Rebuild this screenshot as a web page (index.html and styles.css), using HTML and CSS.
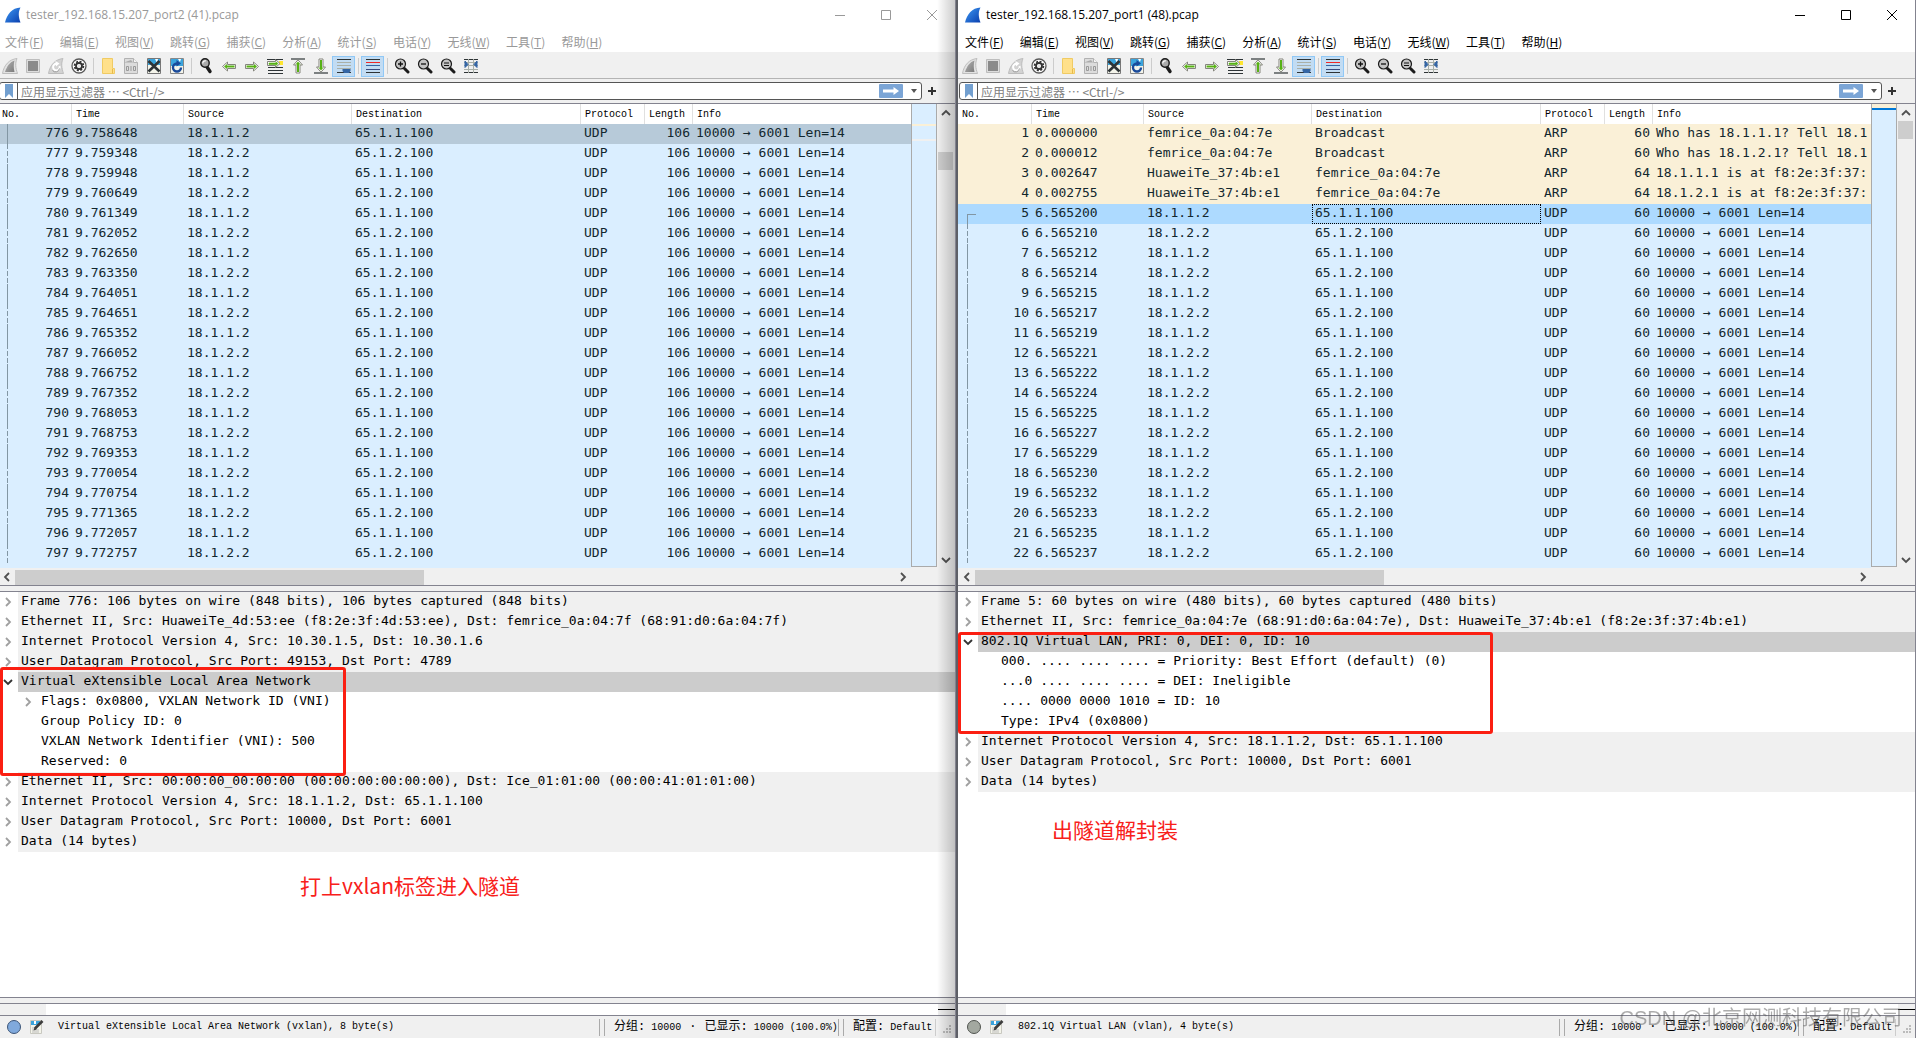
FILE: index.html
```html
<!DOCTYPE html>
<html lang="zh-CN">
<head>
<meta charset="utf-8">
<title>Wireshark</title>
<link rel="stylesheet" href="styles.css">
</head>
<body>
<svg class="sprite" aria-hidden="true">
  <defs>
    <linearGradient id="gBlue" x1="0" y1="0" x2="1" y2="1"><stop offset="0" stop-color="#3f9bf5"/><stop offset="1" stop-color="#0a3fae"/></linearGradient>
    <linearGradient id="gGrey" x1="0" y1="0" x2="1" y2="1"><stop offset="0" stop-color="#b5b5b5"/><stop offset="1" stop-color="#7b7b7b"/></linearGradient>
    <symbol id="logo" viewBox="0 0 16 16"><path d="M0 15.500C2 7 7 1 15.500 0.500C13 5 13.500 10 15.500 15.500Z" fill="url(#gBlue)"/></symbol>
    <symbol id="fin" viewBox="0 0 16 16"><path d="M0.500 15.500C2 7 7 1.500 15 0.500C13 5 13.500 10 15.500 15.500Z" fill="#e2e2e2" stroke="#bdbdbd"/><path d="M3 14C5 8 8 4 12.500 2.500C11.500 6 11.500 10 12.500 14Z" fill="url(#gGrey)"/></symbol>
    <symbol id="stop" viewBox="0 0 16 16"><path d="M1.500 1.500h13v13h-13z" fill="#ddd" stroke="#bdbdbd"/><path d="M3 3h10v10H3z" fill="#8a8a8a"/></symbol>
    <symbol id="restart" viewBox="0 0 16 16"><path d="M0.500 15.500C2 7 7 1.500 15 0.500C13 5 13.500 10 15.500 15.500Z" fill="#d2d2d2" stroke="#bdbdbd"/><path d="M11.500 8a3.300 3.300 0 1 1-3-2.200" fill="none" stroke="#fff" stroke-width="2"/><path d="M7.500 3l4 2.500-3.500 3z" fill="#fff"/><path d="M4.500 12.500a4 4 0 0 0 7-2" fill="none" stroke="#999"/></symbol>
    <symbol id="options" viewBox="0 0 16 16"><circle cx="8" cy="8" r="7" fill="#fff" stroke="#5a5a5a" stroke-width="1.300"/><circle cx="8" cy="8" r="4.400" fill="none" stroke="#333" stroke-width="1.800" stroke-dasharray="2 1.450"/><circle cx="8" cy="8" r="3" fill="none" stroke="#333" stroke-width="1.800"/><circle cx="8" cy="8" r="1.700" fill="#e8e8e8"/></symbol>
    <symbol id="open" viewBox="0 0 16 16"><path d="M2.500 0.500h10v10h2v5h-12z" fill="#ffe08a" stroke="#f0cb63"/><path d="M12.500 11v4.500" stroke="#e6b94a"/></symbol>
    <symbol id="save" viewBox="0 0 16 16"><path d="M1.500 0.500h9l4 4v11h-13z" fill="#dcdcdc" stroke="#b2b2b2"/><path d="M1 4.500h9L8 2z" fill="#aaa"/><path d="M10.500 0.500v4h4" fill="#f5f5f5" stroke="#b2b2b2"/><g fill="none" stroke="#999"><path d="M3.500 8.500h2v4h-2zM8 8v5M10.500 8.500h2v4h-2z"/></g></symbol>
    <symbol id="closef" viewBox="0 0 16 16"><path d="M1.500 0.500h13v15h-13z" fill="#f4f4ea" stroke="#777"/><path d="M2 1h12v6H2z" fill="#3ba4dc"/><path d="M9 1h3l-1 4z" fill="#fff"/><path d="M2.500 3l11 10.500M13.500 3L2.500 13.500" stroke="#2e3436" stroke-width="2.600"/></symbol>
    <symbol id="reload" viewBox="0 0 16 16"><path d="M1.500 0.500h13v15h-13z" fill="#f4f4ea" stroke="#888"/><path d="M2 1h12v7H2z" fill="#3ba4dc"/><path d="M9 1h3l-1 3z" fill="#fff"/><path d="M12 9.500A4 4 0 1 1 8 5.500" fill="none" stroke="#1a4a9a" stroke-width="2.400"/><path d="M7.500 2l4.500 3.500-4.500 3z" fill="#1a4a9a"/></symbol>
    <symbol id="find" viewBox="0 0 16 16"><path d="M9 9l3 4.500" stroke="#1b1b1b" stroke-width="3.400" stroke-linecap="round"/><circle cx="7" cy="5" r="4.200" fill="#aaa" stroke="#1b1b1b" stroke-width="1.400"/><path d="M4.800 5.500a2.400 2.400 0 0 1 3-2.600" fill="none" stroke="#fff" stroke-width="1.200"/></symbol>
    <symbol id="prev" viewBox="0 0 16 16"><path d="M1.500 8.500L6.500 4v2.500h8v4h-8V13z" fill="#fff" stroke="#85857c"/><path d="M3 8.500L6 6v1.500h7.500v2H6V11z" fill="#57b115"/></symbol>
    <symbol id="next" viewBox="0 0 16 16"><path d="M14.500 8.500L9.500 4v2.500h-8v4h8V13z" fill="#fff" stroke="#85857c"/><path d="M13 8.500L10 6v1.500H2.500v2H10V11z" fill="#57b115"/></symbol>
    <symbol id="goto" viewBox="0 0 16 16"><path d="M0 1.500h16M1 9.500h15M1 12.500h15M1 15.500h15" stroke="#2e3436" stroke-width="1.200"/><path d="M12 3h4v4h-4z" fill="#ffe62e"/><path d="M13 5.500L8.500 1.500v2h-8v4h8v2z" fill="#fff" stroke="#85857c"/><path d="M11 5.500L9 4v1H2v1.500h7v1z" fill="#57b115" stroke="#57b115" stroke-width=".6"/></symbol>
    <symbol id="first" viewBox="0 0 16 16"><path d="M1 1h14" stroke="#2e3436" stroke-width="1.200"/><path d="M8 1.800L3.500 7H6v8h4V7h2.500z" fill="#fff" stroke="#85857c"/><path d="M8 3.500L5.500 6.500H7V14h2V6.500h1.500z" fill="#57b115"/></symbol>
    <symbol id="last" viewBox="0 0 16 16"><path d="M1 15h14" stroke="#2e3436" stroke-width="1.200"/><path d="M8 14.200L3.500 9H6V1h4v8h2.500z" fill="#fff" stroke="#85857c"/><path d="M8 12.500L5.500 9.500H7V2h2v7.500h1.500z" fill="#57b115"/></symbol>
    <symbol id="autoscroll" viewBox="0 0 16 16"><path d="M1 1.500h14M1 14.500h14" stroke="#2e3436"/><path d="M1 4.500h14M1 7.500h14M1 10.500h14" stroke="#aab0a8"/><path d="M6.500 11h8v2l-1.500 2H8l-1.500-2z" fill="#3465a4"/></symbol>
    <symbol id="colorize" viewBox="0 0 16 16"><path d="M1 1.500h14M1 14.500h14" stroke="#2e3436"/><path d="M1 4.500h14" stroke="#ef2929"/><path d="M1 7.500h14" stroke="#3465a4"/><path d="M1 11.500h14" stroke="#3a4a80"/></symbol>
    <symbol id="lens" viewBox="0 0 16 16"><path d="M10.500 10.500l3.500 3.500" stroke="#1b1b1b" stroke-width="3" stroke-linecap="round"/><circle cx="6.500" cy="6" r="5" fill="#c4c4c4" stroke="#1b1b1b" stroke-width="1.200"/></symbol>
    <symbol id="zoomin" viewBox="0 0 16 16"><use href="#lens"/><path d="M4 6h5M6.500 3.500v5" stroke="#111" stroke-width="1.300"/></symbol>
    <symbol id="zoomout" viewBox="0 0 16 16"><use href="#lens"/><path d="M4 6h5" stroke="#111" stroke-width="1.300"/></symbol>
    <symbol id="zoomone" viewBox="0 0 16 16"><use href="#lens"/><path d="M4 5h5M4 7.500h5" stroke="#111" stroke-width="1.200"/></symbol>
    <symbol id="resize" viewBox="0 0 16 16"><path d="M1 1.500h14M1 14.500h14" stroke="#2e3436"/><path d="M1 4.500h14M1 7.500h14M1 11.500h14M5.500 1v14M10.500 1v14" stroke="#aab0a8"/><path d="M2 3l3 3.500L2 9.500zM14 3l-3 3.500L14 9.500z" fill="#3465a4" stroke="#3465a4"/></symbol>
    <symbol id="bookmark" viewBox="0 0 10 16"><path d="M1 1h8v14l-4-4-4 4z" fill="#729fcf"/></symbol>
    <symbol id="apply" viewBox="0 0 24 14"><rect width="24" height="14" rx="1" fill="#7ba5d6"/><path d="M4 5.500h10.500V3L20 7l-5.500 4V8.500H4z" fill="#fff"/></symbol>
    <symbol id="right" viewBox="0 0 8 10"><path d="M2 1l4 4-4 4" fill="none" stroke="currentColor" stroke-width="1.800"/></symbol>
    <symbol id="left" viewBox="0 0 8 10"><path d="M6 1L2 5l4 4" fill="none" stroke="currentColor" stroke-width="1.800"/></symbol>
    <symbol id="down" viewBox="0 0 10 8"><path d="M1 2l4 4 4-4" fill="none" stroke="currentColor" stroke-width="1.800"/></symbol>
    <symbol id="up" viewBox="0 0 10 8"><path d="M1 6l4-4 4 4" fill="none" stroke="currentColor" stroke-width="1.800"/></symbol>
    <symbol id="min" viewBox="0 0 12 12"><path d="M1 6.500h10" stroke="currentColor"/></symbol>
    <symbol id="max" viewBox="0 0 12 12"><path d="M1.500 1.500h9v9h-9z" fill="none" stroke="currentColor"/></symbol>
    <symbol id="x" viewBox="0 0 12 12"><path d="M1 1l10 10M11 1L1 11" stroke="currentColor"/></symbol>
    <symbol id="note" viewBox="0 0 16 16"><path d="M1.500 1.500h11v13h-11z" fill="#f4f4ea" stroke="#c8c8c0"/><path d="M2 2h9v4H2z" fill="#3ba4dc"/><path d="M5 2h2v3H5z" fill="#fff"/><path d="M3 9h5M3 11h7M3 13h7" stroke="#bbb"/><path d="M6 9.500L13.500 2" stroke="#3c3c3c" stroke-width="2.600"/><path d="M4.500 11.500l1-3 2 2z" fill="#3c3c3c"/></symbol>
    <symbol id="grip" viewBox="0 0 10 10"><path d="M7 0h2v2H7zM4 3h2v2H4zM7 3h2v2H7zM1 6h2v2H1zM4 6h2v2H4zM7 6h2v2H7z" fill="#bbb"/></symbol>
  </defs>
</svg>

<main class="desktop">
  <section class="window inactive">
    <header class="titlebar">
      <svg class="logo"><use href="#logo"/></svg>
      <h1 class="title">tester_192.168.15.207_port2 (41).pcap</h1>
      <button class="caption" aria-label="最小化"><svg><use href="#min"/></svg></button>
      <button class="caption" aria-label="最大化"><svg><use href="#max"/></svg></button>
      <button class="caption" aria-label="关闭"><svg><use href="#x"/></svg></button>
    </header>
    <nav class="menubar">
      <button>文件(<u>F</u>)</button><button>编辑(<u>E</u>)</button><button>视图(<u>V</u>)</button><button>跳转(<u>G</u>)</button><button>捕获(<u>C</u>)</button><button>分析(<u>A</u>)</button><button>统计(<u>S</u>)</button><button>电话(<u>Y</u>)</button><button>无线(<u>W</u>)</button><button>工具(<u>T</u>)</button><button>帮助(<u>H</u>)</button>
    </nav>
    <div class="toolbar"></div>
    <form class="filterbar">
      <div class="filterbox">
        <button type="button" class="bookmark" aria-label="书签"><svg><use href="#bookmark"/></svg></button>
        <input type="text" aria-label="显示过滤器" placeholder="应用显示过滤器 ⋯ &lt;Ctrl-/&gt;">
        <button type="button" class="apply" aria-label="应用"><svg><use href="#apply"/></svg></button>
        <button type="button" class="recent" aria-label="历史"></button>
      </div>
      <button type="button" class="add" aria-label="添加"></button>
    </form>
    <div class="packets">
      <div class="packet-view">
        <table class="packet-table" data-capture="port2"></table>
      </div>
      <div class="minimap"><i class="mark-arp"></i><i class="mark-view"></i></div>
      <div class="vscroll"><button aria-label="向上"><svg><use href="#up"/></svg></button><div class="vtrack"><div class="vthumb lower"></div></div><button aria-label="向下"><svg><use href="#down"/></svg></button></div>
      <div class="hscroll"><button aria-label="向左"><svg><use href="#left"/></svg></button><div class="htrack"><div class="hthumb"></div></div><button aria-label="向右"><svg><use href="#right"/></svg></button></div>
    </div>
    <div class="splitter"></div>
    <div class="details">
      <ul class="tree">
        <li class="node"><svg><use href="#right"/></svg><span>Frame 776: 106 bytes on wire (848 bits), 106 bytes captured (848 bits)</span></li>
        <li class="node"><svg><use href="#right"/></svg><span>Ethernet II, Src: HuaweiTe_4d:53:ee (f8:2e:3f:4d:53:ee), Dst: femrice_0a:04:7f (68:91:d0:6a:04:7f)</span></li>
        <li class="node"><svg><use href="#right"/></svg><span>Internet Protocol Version 4, Src: 10.30.1.5, Dst: 10.30.1.6</span></li>
        <li class="node"><svg><use href="#right"/></svg><span>User Datagram Protocol, Src Port: 49153, Dst Port: 4789</span></li>
        <li class="node open"><svg><use href="#down"/></svg><span>Virtual eXtensible Local Area Network</span></li>
        <li class="leaf"><svg><use href="#right"/></svg><span>Flags: 0x0800, VXLAN Network ID (VNI)</span></li>
        <li class="leaf"><span>Group Policy ID: 0</span></li>
        <li class="leaf"><span>VXLAN Network Identifier (VNI): 500</span></li>
        <li class="leaf"><span>Reserved: 0</span></li>
        <li class="node"><svg><use href="#right"/></svg><span>Ethernet II, Src: 00:00:00_00:00:00 (00:00:00:00:00:00), Dst: Ice_01:01:00 (00:00:41:01:01:00)</span></li>
        <li class="node"><svg><use href="#right"/></svg><span>Internet Protocol Version 4, Src: 18.1.1.2, Dst: 65.1.1.100</span></li>
        <li class="node"><svg><use href="#right"/></svg><span>User Datagram Protocol, Src Port: 10000, Dst Port: 6001</span></li>
        <li class="node"><svg><use href="#right"/></svg><span>Data (14 bytes)</span></li>
      </ul>
      <div class="callout callout-vxlan"></div>
      <p class="remark remark-vxlan">打上vxlan标签进入隧道</p>
    </div>
    <div class="splitter"></div>
    <div class="bytes"><div class="offset"></div><div class="bytes-scroll"></div></div>
    <footer class="statusbar">
      <button class="expert blue" aria-label="专家信息"></button>
      <button class="note" aria-label="注释"><svg><use href="#note"/></svg></button>
      <span class="status-field">Virtual eXtensible Local Area Network (vxlan), 8 byte(s)</span>
      <span class="status-cell counts"><b>分组:</b> 10000 <b class="dot">·</b> <b>已显示:</b> 10000 (100.0%)</span>
      <span class="status-cell profile"><b>配置:</b> Default</span>
      <svg class="grip"><use href="#grip"/></svg>
    </footer>
  </section>

  <section class="window">
    <header class="titlebar">
      <svg class="logo"><use href="#logo"/></svg>
      <h1 class="title">tester_192.168.15.207_port1 (48).pcap</h1>
      <button class="caption" aria-label="最小化"><svg><use href="#min"/></svg></button>
      <button class="caption" aria-label="最大化"><svg><use href="#max"/></svg></button>
      <button class="caption" aria-label="关闭"><svg><use href="#x"/></svg></button>
    </header>
    <nav class="menubar">
      <button>文件(<u>F</u>)</button><button>编辑(<u>E</u>)</button><button>视图(<u>V</u>)</button><button>跳转(<u>G</u>)</button><button>捕获(<u>C</u>)</button><button>分析(<u>A</u>)</button><button>统计(<u>S</u>)</button><button>电话(<u>Y</u>)</button><button>无线(<u>W</u>)</button><button>工具(<u>T</u>)</button><button>帮助(<u>H</u>)</button>
    </nav>
    <div class="toolbar"></div>
    <form class="filterbar">
      <div class="filterbox">
        <button type="button" class="bookmark" aria-label="书签"><svg><use href="#bookmark"/></svg></button>
        <input type="text" aria-label="显示过滤器" placeholder="应用显示过滤器 ⋯ &lt;Ctrl-/&gt;">
        <button type="button" class="apply" aria-label="应用"><svg><use href="#apply"/></svg></button>
        <button type="button" class="recent" aria-label="历史"></button>
      </div>
      <button type="button" class="add" aria-label="添加"></button>
    </form>
    <div class="packets">
      <div class="packet-view">
        <table class="packet-table" data-capture="port1"></table>
      </div>
      <div class="minimap"><i class="mark-top"></i><i class="mark-current"></i></div>
      <div class="vscroll"><button aria-label="向上"><svg><use href="#up"/></svg></button><div class="vtrack"><div class="vthumb"></div></div><button aria-label="向下"><svg><use href="#down"/></svg></button></div>
      <div class="hscroll"><button aria-label="向左"><svg><use href="#left"/></svg></button><div class="htrack"><div class="hthumb"></div></div><button aria-label="向右"><svg><use href="#right"/></svg></button></div>
    </div>
    <div class="splitter"></div>
    <div class="details">
      <ul class="tree">
        <li class="node"><svg><use href="#right"/></svg><span>Frame 5: 60 bytes on wire (480 bits), 60 bytes captured (480 bits)</span></li>
        <li class="node"><svg><use href="#right"/></svg><span>Ethernet II, Src: femrice_0a:04:7e (68:91:d0:6a:04:7e), Dst: HuaweiTe_37:4b:e1 (f8:2e:3f:37:4b:e1)</span></li>
        <li class="node open"><svg><use href="#down"/></svg><span>802.1Q Virtual LAN, PRI: 0, DEI: 0, ID: 10</span></li>
        <li class="leaf"><span>000. .... .... .... = Priority: Best Effort (default) (0)</span></li>
        <li class="leaf"><span>...0 .... .... .... = DEI: Ineligible</span></li>
        <li class="leaf"><span>.... 0000 0000 1010 = ID: 10</span></li>
        <li class="leaf"><span>Type: IPv4 (0x0800)</span></li>
        <li class="node"><svg><use href="#right"/></svg><span>Internet Protocol Version 4, Src: 18.1.1.2, Dst: 65.1.1.100</span></li>
        <li class="node"><svg><use href="#right"/></svg><span>User Datagram Protocol, Src Port: 10000, Dst Port: 6001</span></li>
        <li class="node"><svg><use href="#right"/></svg><span>Data (14 bytes)</span></li>
      </ul>
      <div class="callout callout-vlan"></div>
      <p class="remark remark-vlan">出隧道解封装</p>
    </div>
    <div class="splitter"></div>
    <div class="bytes"><div class="offset"></div><div class="bytes-scroll"></div></div>
    <footer class="statusbar">
      <button class="expert" aria-label="专家信息"></button>
      <button class="note" aria-label="注释"><svg><use href="#note"/></svg></button>
      <span class="status-field">802.1Q Virtual LAN (vlan), 4 byte(s)</span>
      <span class="status-cell counts"><b>分组:</b> 10000 <b class="dot">·</b> <b>已显示:</b> 10000 (100.0%)</span>
      <span class="status-cell profile"><b>配置:</b> Default</span>
      <svg class="grip"><use href="#grip"/></svg>
    </footer>
  </section>
</main>
<div class="watermark">CSDN @北京网测科技有限公司</div>
<script src="app.js"></script>
</body>
</html>
```
FILE: styles.css
```css
* { box-sizing: border-box; }
body { margin: 0; overflow: hidden; font: 12px/16px "Noto Sans", "Noto Sans CJK SC", sans-serif; color: #000; }
button { margin: 0; padding: 0; border: 0; background: none; font: inherit; color: inherit; }
svg { display: block; }
.sprite { position: absolute; width: 0; height: 0; }

.desktop { display: grid; grid-template-columns: 1fr 1fr; gap: 2px; min-height: 100vh; margin-left: -2px; background: #5d5f66; }
.window { position: relative; display: flex; flex-direction: column; min-width: 0; background: #fff; border-right: 1px solid #83838f; }
.window.inactive::after { content: ""; position: absolute; top: 0; right: 0; bottom: 0; width: 18px; background: linear-gradient(to right, transparent, rgba(0, 0, 0, .2)); pointer-events: none; }

.titlebar { display: flex; align-items: center; height: 29px; padding: 0 0 0 7px; }
.logo { width: 16px; height: 16px; }
.title { flex: 1; margin: 0 0 0 5px; font: 12px/16px "Open Sans", "Noto Sans", sans-serif; }
.caption { display: flex; justify-content: center; width: 46px; }
.caption svg { width: 12px; height: 12px; }
.inactive .title, .inactive .caption, .inactive .menubar { color: #999; }

.menubar { display: flex; gap: 16px; height: 24px; padding: 4px 0 0 7px; font-family: "Noto Sans CJK SC", sans-serif; border-bottom: 1px solid #f0f0f0; }
.menubar button { height: 18px; line-height: 18px; white-space: nowrap; }

.toolbar { display: flex; align-items: center; height: 26px; border-bottom: 1px solid #b4b4b4; background: #f0f0f0; padding-top: 1px; }
.toolbar button { display: flex; align-items: center; justify-content: center; width: 23px; height: 21px; }
.toolbar button svg { width: 16px; height: 16px; }
.toolbar button.checked { border: 1px solid #90c8f6; background: #c2dcf3; }
.toolbar .sep { width: 6px; height: 16px; background: linear-gradient(#ccc, #ccc) 3px 0 / 1px 100% no-repeat; }

.filterbar { display: flex; align-items: center; height: 24px; margin: 0; background: #f0f0f0; }
.filterbox { flex: 1; display: flex; align-items: center; height: 18px; margin-left: 1px; border: 1px solid #555; border-radius: 3px; background: #fff; }
.bookmark { display: flex; align-items: center; justify-content: center; width: 18px; height: 16px; border-right: 1px solid #555; }
.bookmark svg { width: 10px; height: 16px; }
.filterbox input { flex: 1; min-width: 0; height: 16px; padding: 1px 3px 0; border: 0; outline: 0; background: none; font: 12px/15px "Noto Sans CJK SC", sans-serif; }
.filterbox input::placeholder { color: #808080; opacity: 1; }
.apply svg { width: 24px; height: 14px; }
.recent { width: 18px; height: 16px; display: flex; align-items: center; justify-content: center; }
.recent::before { content: ""; margin-left: 4px; border: 3px solid transparent; border-top: 4px solid #555; border-bottom: 0; }
.add { width: 33px; height: 18px; background: linear-gradient(#333, #333) 6px 8px / 8px 2px no-repeat, linear-gradient(#333, #333) 9px 5px / 2px 8px no-repeat; }

.packets { display: grid; grid-template-columns: 1fr 26px 18px; grid-template-rows: 464px 17px; height: 483px; border-top: 1px solid #83838f; border-bottom: 1px solid #83838f; background: #f0f0f0; }
.packet-view { overflow: hidden; background: #daeeff; }
.packet-table { width: 100%; table-layout: fixed; border-collapse: separate; border-spacing: 0; font: 13px/18px "DejaVu Sans Mono", monospace; color: #12272e; }
.packet-table th { height: 20px; padding: 2px 0 0 4px; border-right: 1px solid #e0e0e0; background: #fff; color: #000; font: 10px/18px "Liberation Mono", monospace; text-align: left; white-space: nowrap; }
.packet-table th:last-child { border-right: 0; }
.packet-table td { height: 20px; padding: 0 0 2px 3px; white-space: nowrap; overflow: hidden; }
.packet-table td.num { padding: 0 3px 2px 0; text-align: right; }
.packet-table .arp { background: #faf0d7; }
.packet-table .current { background: #addaff; }
.inactive .packet-table .current { background: #b7cad9; }
.packet-table .focus { outline: 1px dotted #000; outline-offset: -1px; }
.col-no { width: 74px; } .col-time { width: 112px; } .col-src { width: 168px; } .col-dst { width: 229px; } .col-proto { width: 64px; } .col-len { width: 48px; }
td.trace { background: repeating-linear-gradient(#8296a3 0 5px, transparent 5px 7px) 9px 0 / 1px 100% no-repeat; }
td.trace.solid { background-image: linear-gradient(#8296a3, #8296a3); }
td.trace.start { background: linear-gradient(#8296a3, #8296a3) 9px 10px / 1px 10px no-repeat, linear-gradient(#8296a3, #8296a3) 9px 10px / 9px 1px no-repeat; }

.minimap { border: 1px solid #aaa; border-top: 0; margin-bottom: 1px; background: #daeeff; }
.minimap i { display: block; height: 2px; }
.minimap .mark-arp { margin-top: 20px; background: #faf0d7; }
.minimap .mark-view { margin-top: 13px; background: #f0f0f0; }
.minimap .mark-top { height: 4px; background: #faf0d7; }
.minimap .mark-current { background: #0078d7; }
.vscroll { display: flex; flex-direction: column; align-items: center; color: #505050; padding-right: 1px; }
.vscroll button { display: flex; align-items: center; height: 17px; }
.vscroll svg { width: 10px; height: 8px; }
.vtrack { flex: 1; width: 15px; }
.vthumb { height: 18px; background: #cdcdcd; }
.vthumb.lower { margin-top: 31px; }
.hscroll { grid-column: 1 / 2; display: flex; align-items: center; padding-top: 1px; color: #505050; }
.hscroll button { display: flex; justify-content: center; width: 17px; }
.hscroll svg { width: 8px; height: 10px; }
.htrack { flex: 1; height: 15px; }
.hthumb { width: 46.500%; height: 15px; background: #cdcdcd; }

.splitter { height: 5px; background: #f0f0f0; }
.details { position: relative; flex: 1; border-top: 1px solid #83838f; border-bottom: 1px solid #83838f; background: #fff; }
.tree { margin: 0; padding: 0; list-style: none; font: 13px/18px "DejaVu Sans Mono", monospace; }
.tree li { display: flex; align-items: center; height: 20px; white-space: nowrap; }
.tree svg { width: 10px; height: 10px; margin: 0 5px; color: #a0a0a0; }
.tree span { flex: 1; padding: 0 0 2px 3px; }
.tree .node span { background: #f0f0f0; }
.tree .node.open span { background: #ccc; }
.tree .node.open svg { color: #333; }
.tree .leaf { padding-left: 20px; }
.tree .leaf span:first-child { padding-left: 23px; }
.callout { position: absolute; border: 3px solid #fb1f12; border-radius: 3px; }
.callout-vxlan { left: 2px; top: 75px; width: 346px; height: 109px; }
.callout-vlan { left: 0; top: 40px; width: 535px; height: 102px; }
.remark { position: absolute; margin: 0; color: #f8201a; font: 21px/30px "Noto Sans CJK SC", sans-serif; white-space: nowrap; }
.remark-vxlan { left: 302px; top: 278px; }
.remark-vlan { left: 94px; top: 222px; }

.bytes { display: flex; justify-content: space-between; height: 13px; border-top: 1px solid #83838f; border-bottom: 1px solid #83838f; background: #fff; }
.offset { width: 48px; background: #f0f0f0; }
.bytes-scroll { width: 17px; background: linear-gradient(#000, #000) 0 5px / 100% 1px no-repeat #f0f0f0; }

.statusbar { display: flex; align-items: center; height: 22px; padding-left: 9px; background: #f0f0f0; font: 10px/16px "Liberation Mono", "Noto Sans CJK SC", monospace; white-space: nowrap; }
.statusbar b { font-weight: 400; font-size: 12px; }
.statusbar .dot { margin: 0 2px; }
.expert { width: 14px; height: 14px; border: 1px solid #50544f; border-radius: 50%; background: #a3a8a0; }
.expert.blue { border-color: #3c5578; background: #80a9dc; }
.note { margin-left: 8px; }
.note svg { width: 16px; height: 16px; }
.status-field { flex: 1; margin-left: 13px; }
.status-cell { height: 17px; line-height: 17px; padding-left: 9px; border-left: 1px solid #aaa; box-shadow: -4px 0 0 #f0f0f0, -5px 0 0 #aaa; }
.counts { width: 239px; }
.profile { width: 93px; border-right: 1px solid #ccc; }
.grip { width: 10px; height: 10px; margin: 6px 3px 0 6px; }

.watermark { position: fixed; right: 14px; bottom: 6px; color: rgba(90, 90, 90, .5); font: 20px/28px "Liberation Sans", "Noto Sans CJK SC", sans-serif; white-space: nowrap; pointer-events: none; }
```
FILE: app.js
```js
const TOOLS = ['fin', 'stop', 'restart', 'options', '|', 'open', 'save', 'closef', 'reload', '|',
  'find', 'prev', 'next', 'goto', 'first', 'last', 'autoscroll*', '|', 'colorize*', '|',
  'zoomin', 'zoomout', 'zoomone', 'resize'];

document.querySelectorAll('.toolbar').forEach(bar => {
  bar.innerHTML = TOOLS.map(t => {
    if (t === '|') return '<span class="sep"></span>';
    const id = t.replace('*', '');
    return `<button class="${t.endsWith('*') ? 'checked' : ''}" aria-label="${id}"><svg><use href="#${id}"/></svg></button>`;
  }).join('');
});

const udp = (no, time, net, len) =>
  [no, time, `18.1.${net}.2`, `65.1.${net}.100`, 'UDP', len, '10000 → 6001 Len=14'];

const PORT2_TIMES = ['758648', '759348', '759948', '760649', '761349', '762052', '762650', '763350',
  '764051', '764651', '765352', '766052', '766752', '767352', '768053', '768753', '769353', '770054',
  '770754', '771365', '772057', '772757'];
const PORT1_TIMES = ['200', '210', '212', '214', '215', '217', '219', '221', '222', '224', '225', '227',
  '229', '230', '232', '233', '235', '237'];

const CAPTURES = {
  port2: {
    current: 776, focus: false,
    rows: PORT2_TIMES.map((t, i) => udp(776 + i, '9.' + t, i % 2 + 1, 106))
  },
  port1: {
    current: 5, focus: true,
    rows: [
      [1, '0.000000', 'femrice_0a:04:7e', 'Broadcast', 'ARP', 60, 'Who has 18.1.1.1? Tell 18.1'],
      [2, '0.000012', 'femrice_0a:04:7e', 'Broadcast', 'ARP', 60, 'Who has 18.1.2.1? Tell 18.1'],
      [3, '0.002647', 'HuaweiTe_37:4b:e1', 'femrice_0a:04:7e', 'ARP', 64, '18.1.1.1 is at f8:2e:3f:37:'],
      [4, '0.002755', 'HuaweiTe_37:4b:e1', 'femrice_0a:04:7e', 'ARP', 64, '18.1.2.1 is at f8:2e:3f:37:'],
      ...PORT1_TIMES.map((t, i) => udp(5 + i, '6.565' + t, i % 2 + 1, 60))
    ]
  }
};

const COLUMNS = [['No.', 'no'], ['Time', 'time'], ['Source', 'src'], ['Destination', 'dst'],
  ['Protocol', 'proto'], ['Length', 'len'], ['Info', 'info']];

document.querySelectorAll('.packet-table').forEach(table => {
  const { current, focus, rows } = CAPTURES[table.dataset.capture];
  const head = COLUMNS.map(([label, key]) => `<th class="col-${key}">${label}</th>`).join('');
  const body = rows.map((row, n) => {
    const isCurrent = row[0] === current;
    const isArp = row[4] === 'ARP';
    const trace = isArp ? '' : isCurrent && focus ? 'trace start' : n % 2 ? 'trace' : 'trace solid';
    const cells = row.map((v, i) => {
      const cls = [i === 0 || i === 5 ? 'num' : '', i === 0 ? trace : '', isCurrent && focus && i === 3 ? 'focus' : ''];
      return `<td class="${cls.join(' ').trim()}">${v}</td>`;
    }).join('');
    return `<tr class="${isArp ? 'arp' : ''} ${isCurrent ? 'current' : ''}">${cells}</tr>`;
  }).join('');
  table.innerHTML = `<thead><tr>${head}</tr></thead><tbody>${body}</tbody>`;
});
```
